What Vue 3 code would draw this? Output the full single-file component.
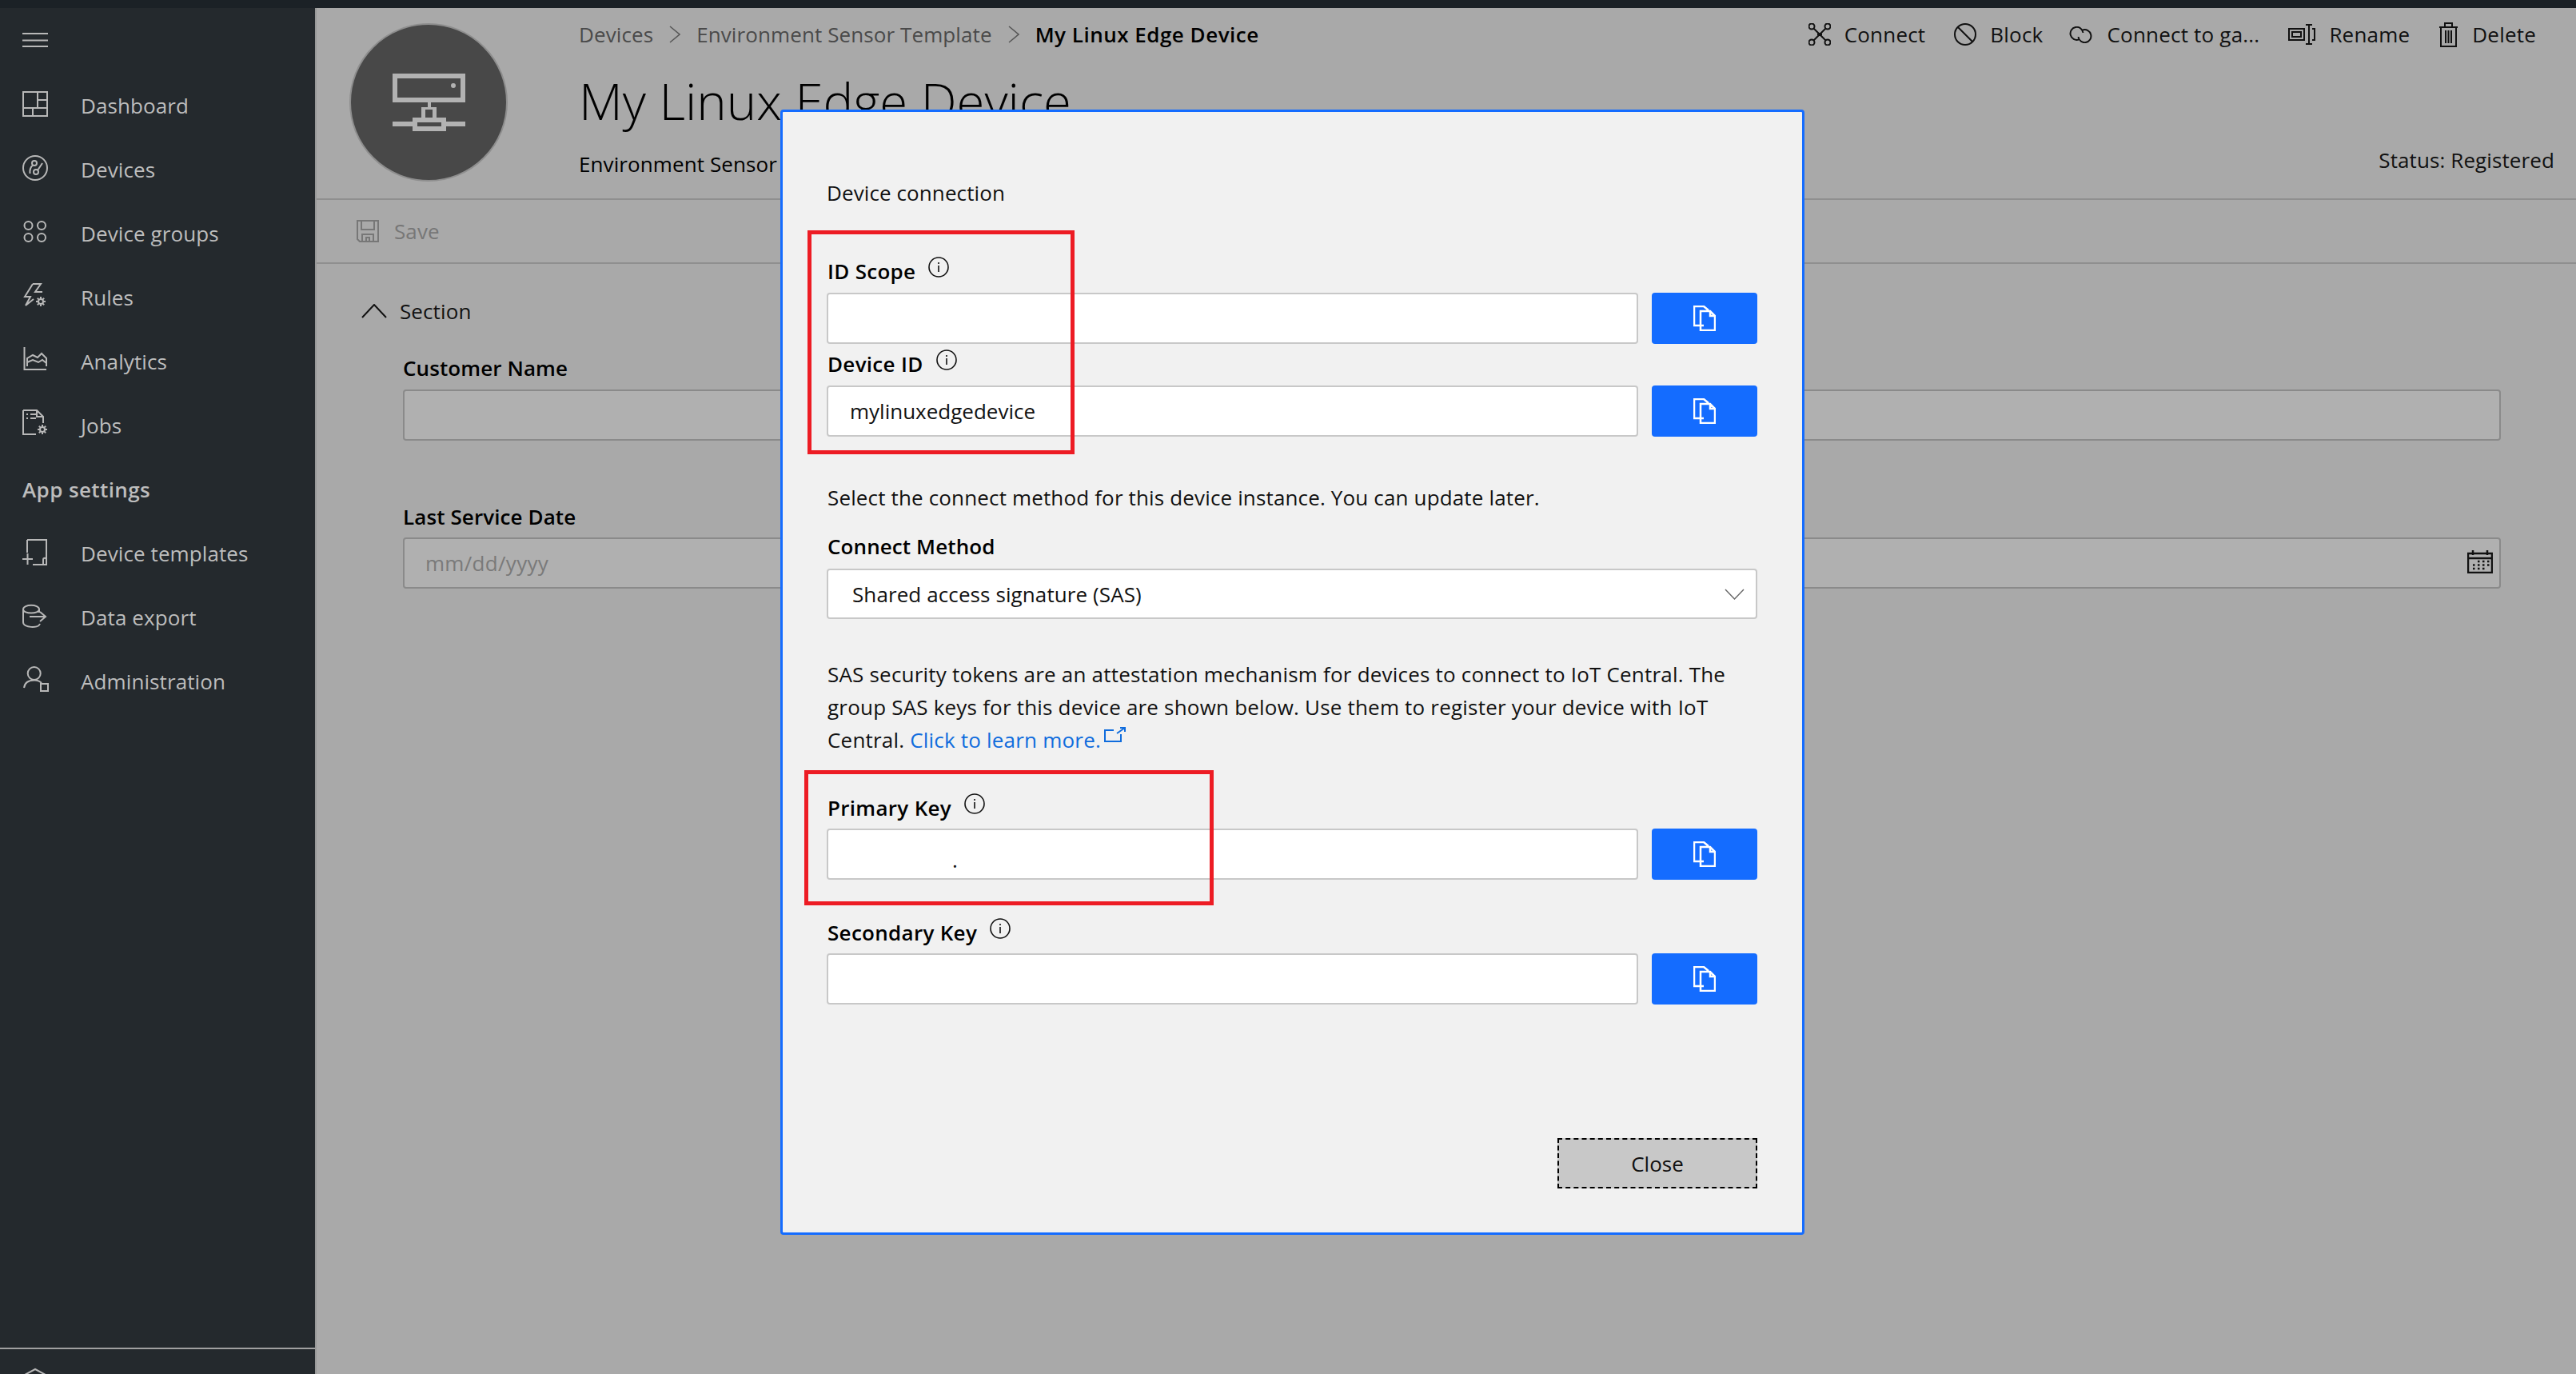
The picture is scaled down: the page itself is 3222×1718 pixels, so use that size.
<script setup>
// helpers for the little line icons
const circle = (cx, cy, r) =>
  `M${cx - r} ${cy}a${r} ${r} 0 1 0 ${2 * r} 0a${r} ${r} 0 1 0 ${-2 * r} 0Z`;

const gear = (cx, cy) => {
  let d = circle(cx, cy, 3);
  for (let i = 0; i < 8; i++) {
    const a = (i * Math.PI) / 4;
    d += `M${(cx + Math.cos(a) * 3).toFixed(1)} ${(cy + Math.sin(a) * 3).toFixed(1)}L${(cx + Math.cos(a) * 6).toFixed(1)} ${(cy + Math.sin(a) * 6).toFixed(1)}`;
  }
  return d;
};

const mainNav = [
  { label: 'Dashboard', d: 'M1 1H31V31H1Z M19 1V21 M19 11H31 M1 21H31 M13 21V31' },
  {
    label: 'Devices',
    d: circle(16, 16, 15) + circle(15, 10, 3) + circle(17, 21, 3) + 'M19 19L25 10 M13 12.5C10 15 9 18 9.5 23',
  },
  {
    label: 'Device groups',
    d: circle(7.5, 8, 5) + circle(24, 8, 5) + circle(7.5, 23, 5) + circle(24, 23, 5),
  },
  { label: 'Rules', d: 'M13 1H23L16 11H25 M13 1L3 17H10L4 28L14 20' + gear(23, 23) },
  { label: 'Analytics', d: 'M2.5 0V28H30 M6 24V14L13 10L19 13L24 8L30 14V24 M6 19L13 16L20 19L25 16L30 20' },
  { label: 'Jobs', d: 'M1 -1H18L26 7V15 M1 -1V29H17 M18 -1V7H26 M5 4H7 M10 4H17 M5 9H7 M10 9H17' + gear(25, 23) },
];

const settingsNav = [
  { label: 'Device templates', d: 'M6 -1H30V30H13 M6 -1V15 M0 23H13 M6.5 16V30 M26 30V24C26 21 30 21 30 24' },
  { label: 'Data export', d: 'M1 6C1 -1 21 -1 21 6C21 12 1 12 1 6 M1 6V22C1 29 20 30 22 24 M21 6V10 M9 15H29 M22 9L29 15L22 21' },
  { label: 'Administration', d: circle(14.7, 6, 8) + 'M2 24C3 17 8 14.5 15 14.5C18 14.5 22 16 24 18 M23 19H32V28H23Z' },
];

const commands = [
  {
    label: 'Connect',
    w: 28,
    h: 28,
    d: circle(4, 4, 3.5) + circle(24, 4, 3.5) + circle(4, 24, 3.5) + circle(24, 24, 3.5) + 'M7 7L21 21 M21 7L7 21 M11 14H17',
  },
  { label: 'Block', w: 28, h: 28, d: circle(14, 14, 13) + 'M5 5L23 23' },
  {
    label: 'Connect to ga...',
    w: 31,
    h: 21,
    d: 'M13 16.5A8 8 0 1 1 18.5 8 M18 4.5A8 8 0 1 1 12.5 13',
  },
  { label: 'Rename', w: 34, h: 26, d: 'M1 6H20V20H1Z M5 10H16V16H5Z M26 1V25 M22 1H30 M22 25H30 M30 6H33V20H30' },
  { label: 'Delete', w: 25, h: 31, d: 'M1 6H24 M3 6V30H22V6 M8 6V1H17V6 M9 10V26 M12.5 10V26 M16 10V26' },
];

const idFields = [
  { label: 'ID Scope', value: '' },
  { label: 'Device ID', value: 'mylinuxedgedevice' },
];

const keyFields = [
  { label: 'Primary Key', value: '.', cls: 'key-input' },
  { label: 'Secondary Key', value: '' },
];

const copyIcon = 'M13 25H1V1H13L19 6 M9 7H21L27 13V31H9Z M21 7V13H27';
</script>

<template>
  <div class="page">
    <div class="topbar"></div>
    <div class="shell">
      <aside class="sidebar">
        <div class="burger">
          <svg width="32" height="18" viewBox="0 0 32 18"><path d="M0 1H32 M0 9.5H32 M0 17H32" /></svg>
        </div>
        <a v-for="item in mainNav" :key="item.label" class="nav-item main-item">
          <svg class="nav-icon" width="32" height="32" viewBox="0 0 32 32"><path :d="item.d" /></svg>
          <span>{{ item.label }}</span>
        </a>
        <div class="nav-heading">App settings</div>
        <a v-for="item in settingsNav" :key="item.label" class="nav-item">
          <svg class="nav-icon" width="32" height="32" viewBox="0 0 32 32"><path :d="item.d" /></svg>
          <span>{{ item.label }}</span>
        </a>
        <div class="side-foot">
          <svg width="32" height="32" viewBox="0 0 32 32"><path d="M3 8L16 1L29 8V28" /></svg>
        </div>
      </aside>

      <main class="main">
        <header class="header">
          <div class="avatar">
            <svg width="91" height="72" viewBox="0 0 91 72">
              <path class="av-fill" d="M0 0H91V36H0Z M44 36H48V42H44Z M36 42H55V57H36Z M0 60H25V66H0Z M67 60H91V66H67Z M25 55H67V72H25Z" />
              <path class="av-hole" d="M6 6H85V30H6Z M41 45H50V55H41Z M31 61H61V66H31Z" />
              <circle class="av-dot" cx="76" cy="15" r="3" />
            </svg>
          </div>
          <div class="info">
            <nav class="crumbs">
              <span>Devices</span>
              <svg width="14" height="22" viewBox="0 0 14 22"><path d="M1 1L13 11L1 21" /></svg>
              <span>Environment Sensor Template</span>
              <svg width="14" height="22" viewBox="0 0 14 22"><path d="M1 1L13 11L1 21" /></svg>
              <span class="crumb-current">My Linux Edge Device</span>
            </nav>
            <h1 class="title">My Linux Edge Device</h1>
            <div class="subtitle">Environment Sensor Template</div>
          </div>
          <div class="head-right">
            <div class="commands">
              <button v-for="c in commands" :key="c.label" class="cmd">
                <svg :width="c.w" :height="c.h" :viewBox="`0 0 ${c.w} ${c.h}`"><path :d="c.d" /></svg>
                <span>{{ c.label }}</span>
              </button>
            </div>
            <div class="status">Status: Registered</div>
          </div>
        </header>

        <div class="savebar">
          <svg width="28" height="28" viewBox="0 0 28 28"><path d="M1 1H27V27H4L1 24Z M6 1V12H22V1 M7 27V18H21V27 M12 27V22H16V27" /></svg>
          <span>Save</span>
        </div>

        <section class="form">
          <div class="section-head">
            <svg width="32" height="18" viewBox="0 0 32 18"><path d="M1 17L16 1L31 17" /></svg>
            <span>Section</span>
          </div>
          <label class="form-label">Customer Name</label>
          <input class="form-input" type="text" readonly />
          <label class="form-label second">Last Service Date</label>
          <div class="date-wrap">
            <input class="form-input date-input" type="text" placeholder="mm/dd/yyyy" readonly />
            <svg class="date-icon" width="32" height="30" viewBox="0 0 32 30">
              <path d="M1 5H31V29H1Z M1 11H31 M7 1V7 M25 1V7" />
              <path class="date-dots" d="M13 15H28 M7 19.5H28 M7 24H22" />
            </svg>
          </div>
        </section>

        <div class="modal">
          <div class="modal-title">Device connection</div>

          <div v-for="f in idFields" :key="f.label" class="field">
            <div class="field-label">
              <span>{{ f.label }}</span>
              <svg class="info-icon" width="26" height="26" viewBox="0 0 26 26">
                <circle cx="13" cy="13" r="12" />
                <path d="M13 11V19 M13 7V9" />
              </svg>
            </div>
            <div class="field-row">
              <input class="text-input" type="text" :value="f.value" readonly />
              <button class="copy-btn">
                <svg width="28" height="32" viewBox="0 0 28 32"><path :d="copyIcon" /></svg>
              </button>
            </div>
          </div>

          <p class="hint">Select the connect method for this device instance. You can update later.</p>
          <div class="method-label">Connect Method</div>
          <div class="select">
            <span>Shared access signature (SAS)</span>
            <svg width="25" height="14" viewBox="0 0 25 14"><path d="M1 1L12.5 13L24 1" /></svg>
          </div>

          <p class="explain">
            SAS security tokens are an attestation mechanism for devices to connect to IoT Central. The<br />
            group SAS keys for this device are shown below. Use them to register your device with IoT<br />
            Central. <a class="learn">Click to learn more.</a>
            <svg class="ext-icon" width="28" height="19" viewBox="0 0 28 19"><path d="M12 4H1V18H21V9 M16 8L26 1 M20 1H26V6" /></svg>
          </p>

          <div v-for="f in keyFields" :key="f.label" class="field key-field">
            <div class="field-label">
              <span>{{ f.label }}</span>
              <svg class="info-icon" width="26" height="26" viewBox="0 0 26 26">
                <circle cx="13" cy="13" r="12" />
                <path d="M13 11V19 M13 7V9" />
              </svg>
            </div>
            <div class="field-row">
              <input class="text-input" :class="f.cls" type="text" :value="f.value" readonly />
              <button class="copy-btn">
                <svg width="28" height="32" viewBox="0 0 28 32"><path :d="copyIcon" /></svg>
              </button>
            </div>
          </div>

          <button class="close-btn">Close</button>

          <!-- red annotation frames from the screenshot -->
          <div class="mark mark-id"></div>
          <div class="mark mark-key"></div>
        </div>
      </main>
    </div>
  </div>
</template>

<style>
html, body { margin: 0; background: #a9a9a9; }
</style>

<style scoped>
* { box-sizing: border-box; }

.page {
  width: 3222px;
  height: 1718px;
  display: flex;
  flex-direction: column;
  overflow: hidden;
  font-family: "Open Sans", "Noto Sans", sans-serif;
  font-size: 26px;
  letter-spacing: 0.1px;
  color: #111;
}
.topbar { height: 10px; background: #1b2126; flex: none; }
.shell { flex: 1; display: flex; min-height: 0; }

/* sidebar */
.sidebar {
  width: 396px;
  flex: none;
  background: #24292d;
  border-right: 2px solid #999;
  display: flex;
  flex-direction: column;
  color: #bdbdbd;
}
.sidebar svg { overflow: visible; }
.sidebar svg path { fill: none; stroke: #b8b8b8; stroke-width: 2; }
.burger { height: 80px; padding-left: 28px; display: flex; align-items: center; }
.nav-item { height: 80px; display: flex; align-items: center; padding-left: 28px; gap: 41px; flex: none; }
.main-item span { padding-top: 3px; }
.nav-icon { flex: none; }
.nav-heading { height: 82px; padding: 2px 0 0 28px; display: flex; align-items: center; font-weight: 600; letter-spacing: 0.4px; flex: none; }
.side-foot { margin-top: auto; height: 33px; border-top: 2px solid #a0a0a0; padding: 24px 0 0 28px; overflow: hidden; }

/* page behind the dialog */
.main { flex: 1; position: relative; min-width: 0; background: #a9a9a9; }
.header { height: 240px; border-bottom: 2px solid #8f8f8f; display: flex; align-items: flex-start; padding-left: 41px; }
.avatar {
  width: 198px;
  height: 198px;
  margin-top: 19px;
  border-radius: 50%;
  background: #484848;
  border: 2px solid #8e8e8e;
  display: flex;
  align-items: center;
  justify-content: center;
  flex: none;
}
.av-fill { fill: #b2b2b2; }
.av-hole { fill: #484848; }
.av-dot { fill: #b2b2b2; }
.info { margin: 15px 0 0 89px; flex: 1; min-width: 0; }
.crumbs { display: flex; align-items: center; height: 36px; gap: 20px; color: #4a4a4a; }
.crumbs svg path { fill: none; stroke: #555; stroke-width: 1.5; }
.crumb-current { color: #000; font-weight: 600; letter-spacing: 0.5px; }
.title { margin: 25px 0 0; font-size: 63.5px; font-weight: 300; line-height: 80px; letter-spacing: 0; color: #000; white-space: nowrap; }
.subtitle { margin-top: 21px; line-height: 36px; color: #000; white-space: nowrap; }
.head-right { height: 238px; display: flex; flex-direction: column; align-items: flex-end; justify-content: space-between; padding: 15px 27px 30px 0; flex: none; }
.commands { display: flex; gap: 36px; padding-right: 23px; height: 36px; align-items: center; letter-spacing: 0.2px; }
.cmd {
  display: flex;
  align-items: center;
  gap: 17px;
  background: none;
  border: 0;
  padding: 0;
  font: inherit;
  letter-spacing: inherit;
  color: #111;
  white-space: nowrap;
}
.cmd:nth-child(3) { margin-left: -4px; }
.cmd svg path { fill: none; stroke: #111; stroke-width: 2; }
.status { line-height: 36px; color: #111; }

.savebar { height: 80px; border-bottom: 2px solid #8f8f8f; display: flex; align-items: center; gap: 19px; padding-left: 50px; color: #777; }
.savebar svg path { fill: none; stroke: #777; stroke-width: 2; }

.form { padding: 39px 94px 0 108px; display: flex; flex-direction: column; }
.section-head { height: 40px; margin-left: -52px; display: flex; align-items: center; gap: 16px; }
.section-head svg path { fill: none; stroke: #111; stroke-width: 2; }
.form-label { margin-top: 33px; line-height: 36px; font-weight: 600; color: #000; }
.form-label.second { margin-top: 77px; }
.form-input {
  display: block;
  width: 100%;
  height: 64px;
  margin-top: 9px;
  padding: 0 26px;
  background: #b0b0b0;
  border: 2px solid #8a8a8a;
  border-radius: 4px;
  font: inherit;
  letter-spacing: 0.3px;
  outline: none;
}
.form-input::placeholder { color: #7a7a7a; opacity: 1; }
.date-wrap { position: relative; }
.date-input { margin-top: 8px; }
.date-icon { position: absolute; right: 10px; top: 23px; }
.date-icon path { fill: none; stroke: #111; stroke-width: 2.5; }
.date-icon .date-dots { stroke-width: 2.5; stroke-dasharray: 2.5 3.5; }

/* dialog */
.modal {
  position: absolute;
  left: 580px;
  top: 127px;
  width: 1281px;
  height: 1407px;
  background: #f1f1f1;
  border: 3px solid #146cff;
  border-radius: 4px;
  padding: 81px 56px 55px 55px;
  display: flex;
  flex-direction: column;
}
.modal-title { line-height: 40px; }
.field { margin-top: 61px; }
.field + .field { margin-top: 8px; }
.field-label { height: 36px; display: flex; align-items: center; gap: 16px; font-weight: 600; color: #000; }
.field-label span { padding: 0 0 2px 1px; letter-spacing: 0.3px; }
.info-icon { margin-bottom: 12px; flex: none; }
.info-icon circle { fill: none; stroke: #111; stroke-width: 1.6; }
.info-icon path { fill: none; stroke: #111; stroke-width: 1.6; }
.field-row { display: flex; gap: 17px; margin-top: 8px; }
.text-input {
  flex: 1;
  min-width: 0;
  height: 64px;
  padding: 0 27px;
  background: #fff;
  border: 2px solid #c8c8c8;
  border-radius: 4px;
  font: inherit;
  color: #111;
  outline: none;
}
.key-input { padding: 14px 0 0 155px; }
.copy-btn {
  width: 132px;
  height: 64px;
  flex: none;
  border: 0;
  border-radius: 4px;
  background: #146cff;
  display: flex;
  align-items: center;
  justify-content: center;
  padding: 0;
}
.copy-btn svg path { fill: none; stroke: #fff; stroke-width: 2.5; }

.hint { margin: 56px 0 0 1px; line-height: 40px; letter-spacing: 0.15px; }
.method-label { margin: 23px 0 0 1px; line-height: 36px; font-weight: 600; color: #000; }
.select {
  margin-top: 10px;
  height: 63px;
  background: #fff;
  border: 2px solid #c8c8c8;
  border-radius: 4px;
  padding: 0 14px 0 30px;
  display: flex;
  align-items: center;
  justify-content: space-between;
}
.select svg path { fill: none; stroke: #666; stroke-width: 1.4; }
.explain { margin: 49px 0 0 1px; line-height: 41px; letter-spacing: 0.2px; white-space: nowrap; }
.learn { color: #0f6cdd; }
.ext-icon { vertical-align: 7px; margin-left: 4px; }
.ext-icon path { fill: none; stroke: #0f6cdd; stroke-width: 2; }
.key-field { margin-top: 47px; }
.key-field + .key-field { margin-top: 49px; }
.key-field .field-row { margin-top: 7px; }

.close-btn {
  margin-top: auto;
  align-self: flex-end;
  width: 250px;
  height: 63px;
  background: #c8c8c8;
  border: 2px dashed #000;
  font: inherit;
  color: #111;
}

.mark { position: absolute; border: 5px solid #ed1c24; pointer-events: none; }
.mark-id { left: 31px; top: 148px; width: 334px; height: 280px; }
.mark-key { left: 27px; top: 823px; width: 512px; height: 169px; }
</style>
